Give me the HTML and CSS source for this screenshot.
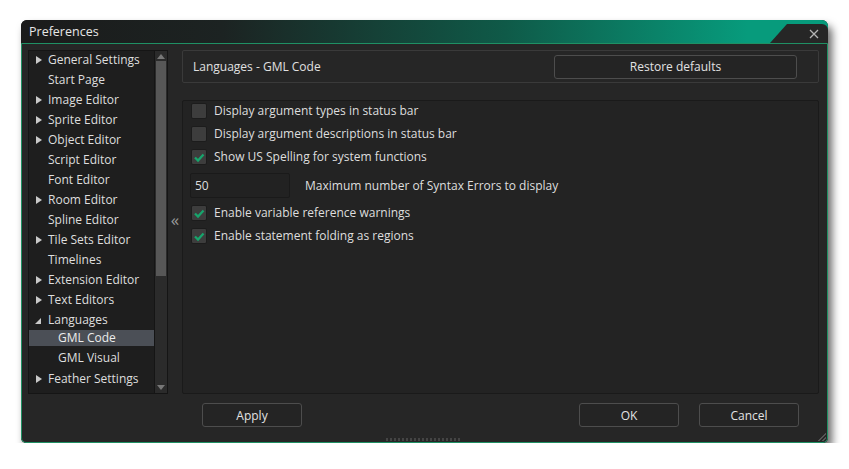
FILE: index.html
```html
<!DOCTYPE html>
<html>
<head>
<meta charset="utf-8">
<link rel="stylesheet" href="styles.css">
</head>
<body>
<div class="window">
  <div class="titlebar">
    <span class="title">Preferences</span>
    <div class="closetab"><svg class="x" viewBox="0 0 10 10" width="10" height="10"><path d="M1 1 L9 9 M9 1 L1 9" stroke="#b4b4b4" stroke-width="1.3" fill="none"/></svg></div>
  </div>
  <div class="body">
    <div class="main">
      <div class="tree">
        <ul class="items">
          <li class="item"><span class="arr closed"></span>General Settings</li>
          <li class="item"><span class="arr"></span>Start Page</li>
          <li class="item"><span class="arr closed"></span>Image Editor</li>
          <li class="item"><span class="arr closed"></span>Sprite Editor</li>
          <li class="item"><span class="arr closed"></span>Object Editor</li>
          <li class="item"><span class="arr"></span>Script Editor</li>
          <li class="item"><span class="arr"></span>Font Editor</li>
          <li class="item"><span class="arr closed"></span>Room Editor</li>
          <li class="item"><span class="arr"></span>Spline Editor</li>
          <li class="item"><span class="arr closed"></span>Tile Sets Editor</li>
          <li class="item"><span class="arr"></span>Timelines</li>
          <li class="item"><span class="arr closed"></span>Extension Editor</li>
          <li class="item"><span class="arr closed"></span>Text Editors</li>
          <li class="item"><span class="arr open"></span>Languages</li>
          <li class="item child sel">GML Code</li>
          <li class="item child second">GML Visual</li>
          <li class="item last"><span class="arr closed"></span>Feather Settings</li>
        </ul>
        <div class="scrollbar">
          <div class="sarrow up"></div>
          <div class="track"><div class="thumb"></div></div>
          <div class="sarrow down"></div>
        </div>
      </div>
      <div class="splitter"><span>«</span></div>
      <div class="right">
        <div class="header">
          <span class="htitle">Languages - GML Code</span>
          <button class="btn restore">Restore defaults</button>
        </div>
        <div class="content">
          <div class="row"><span class="cb"></span>Display argument types in status bar</div>
          <div class="row"><span class="cb"></span>Display argument descriptions in status bar</div>
          <div class="row"><span class="cb on"><svg viewBox="0 0 14 14" width="14" height="14"><path d="M3 7.5 L6 10.5 L11.5 4.5" fill="none" stroke="#17a56c" stroke-width="2.3"/></svg></span>Show US Spelling for system functions</div>
          <div class="row numrow"><span class="num">50</span><span class="numlabel">Maximum number of Syntax Errors to display</span></div>
          <div class="row after"><span class="cb on"><svg viewBox="0 0 14 14" width="14" height="14"><path d="M3 7.5 L6 10.5 L11.5 4.5" fill="none" stroke="#17a56c" stroke-width="2.3"/></svg></span>Enable variable reference warnings</div>
          <div class="row"><span class="cb on"><svg viewBox="0 0 14 14" width="14" height="14"><path d="M3 7.5 L6 10.5 L11.5 4.5" fill="none" stroke="#17a56c" stroke-width="2.3"/></svg></span>Enable statement folding as regions</div>
        </div>
      </div>
    </div>
    <div class="footer">
      <button class="btn apply">Apply</button>
      <div class="spacer"></div>
      <button class="btn ok">OK</button>
      <button class="btn cancel">Cancel</button>
    </div>
    <div class="grip"></div>
    <div class="cornergrip"></div>
  </div>
</div>
</body>
</html>
```

FILE: styles.css
```css
html, body { margin: 0; padding: 0; background: #ffffff; }
body { font-family: "Open Sans", "Noto Sans", sans-serif; font-size: 12px; color: #dcdcdc; }

.window {
  margin: 20px 0 0 21px;
  width: 807px;
  height: 423px;
  border-radius: 6px 6px 5px 5px;
  display: flex;
  flex-direction: column;
  box-shadow: 4px 6px 8px rgba(0,0,0,0.6);
  background: #262626;
}

.titlebar {
  height: 23px;
  flex: none;
  display: flex;
  align-items: center;
  border-radius: 6px 6px 0 0;
  background: linear-gradient(90deg, #1b1b1b 0%, #1c2322 25%, #0f5a48 60%, #079b7c 90%, #079b7c 100%);
  position: relative;
}
.title { padding-left: 8px; color: #e6e6e6; font-size: 12.5px; }
.closetab {
  margin-left: auto;
  width: 58px;
  height: 19px;
  align-self: flex-end;
  background: #262626;
  clip-path: polygon(17px 0, 100% 0, 100% 100%, 0 100%);
  border-top-right-radius: 6px;
  display: flex;
  align-items: center;
  justify-content: flex-end;
}
.x { margin-right: 9px; margin-top: 1px; }

.body {
  flex: 1;
  border: 1px solid #1f9064;
  border-radius: 0 0 5px 5px;
  background: #262626;
  display: flex;
  flex-direction: column;
  padding: 6px 8px 0 6px;
  position: relative;
}

.main { display: flex; height: 344px; }

.tree {
  width: 140px;
  flex: none;
  display: flex;
  background: #1e1e1e;
  border: 1px solid #151515;
  box-sizing: border-box;
}
.items { list-style: none; margin: -1px 0 0 0; padding: 0; flex: 1; }
.item { height: 20px; line-height: 20px; padding-left: 6px; white-space: nowrap; color: #dedede; display: flex; align-items: center; }
.arr { display: inline-block; width: 13px; height: 9px; flex: none; position: relative; }
.arr.closed::before {
  content: "";
  position: absolute; left: 1px; top: 0;
  border-top: 4.5px solid transparent;
  border-bottom: 4.5px solid transparent;
  border-left: 6px solid #c9c9c9;
}
.arr.open::before {
  content: "";
  position: absolute; left: 0; top: 2px;
  border-left: 6px solid transparent;
  border-bottom: 6px solid #c9c9c9;
}
.item.child { padding-left: 29px; height: 16px; line-height: 16px; }
.item.child.second { margin-top: 3px; height: 17px; }
.item.sel { background: #4b4f56; color: #ececec; }
.item.last { margin-top: 3px; }

.scrollbar {
  width: 12px;
  flex: none;
  border-left: 1px solid #151515;
  display: flex;
  flex-direction: column;
  background: #2b2b2b;
}
.sarrow { height: 10px; flex: none; position: relative; }
.sarrow.up::after, .sarrow.down::after {
  content: "";
  position: absolute;
  left: 2px;
  border-left: 4px solid transparent;
  border-right: 4px solid transparent;
}
.sarrow.up::after { top: 3px; border-bottom: 5px solid #777; }
.sarrow.down::after { top: 2px; border-top: 5px solid #777; }
.track { flex: 1; padding: 0 1px; }
.thumb { height: 215px; background: #575757; }

.splitter {
  width: 14px;
  flex: none;
  display: flex;
  align-items: center;
  justify-content: center;
  color: #9a9a9a;
  font-size: 17px;
}
.splitter span { margin-top: -6px; }

.right { flex: 1; display: flex; flex-direction: column; gap: 17px; }
.header {
  height: 33px;
  box-sizing: border-box;
  border: 1px solid #3a3a3a;
  border-radius: 2px;
  display: flex;
  align-items: center;
  padding: 0 21px 0 10px;
}
.htitle { color: #e0e0e0; }

.btn {
  font-family: inherit;
  font-size: 12px;
  color: #e2e2e2;
  background: #242424;
  border: 1px solid #4d4d4d;
  border-radius: 3px;
  height: 24px;
  padding: 0;
}
.restore { margin-left: auto; width: 243px; }

.content {
  flex: 1;
  border: 1px solid #1a1a1a;
  border-radius: 2px;
  background: #232323;
  padding: 0 8px;
  display: flex;
  flex-direction: column;
  gap: 4px;
}
.row { display: flex; align-items: center; height: 19px; flex: none; color: #dedede; }
.cb {
  width: 14px; height: 14px;
  background: #3d3d3d;
  border: 1px solid #1c1c1c;
  border-radius: 2px;
  margin-right: 7px;
  display: flex; align-items: center; justify-content: center;
}
.cb svg { width: 14px; height: 14px; }
.numrow { height: 25px; margin: 3px 0 0 -1px; }
.row.after { margin-top: 1px; }
.num {
  width: 94px; height: 23px;
  border: 1px solid #1a1a1a;
  border-radius: 2px;
  background: #222;
  line-height: 23px;
  padding-left: 4px;
  margin-right: 15px;
}

.footer { display: flex; align-items: flex-start; height: 48px; padding: 9px 20px 0 174px; box-sizing: border-box; }
.footer .btn { width: 100px; height: 24px; }
.spacer { flex: 1; }
.cancel { margin-left: 20px; }

.grip {
  position: absolute;
  left: 364px; bottom: 1px;
  width: 76px; height: 3px;
  background-image: repeating-linear-gradient(90deg, #444 0 2px, transparent 2px 4px);
}
.cornergrip {
  position: absolute;
  right: 1px; bottom: 1px;
  width: 8px; height: 8px;
  background: linear-gradient(135deg, transparent 50%, #555 50%, #555 60%, transparent 60%, transparent 75%, #555 75%, #555 85%, transparent 85%);
}
```
